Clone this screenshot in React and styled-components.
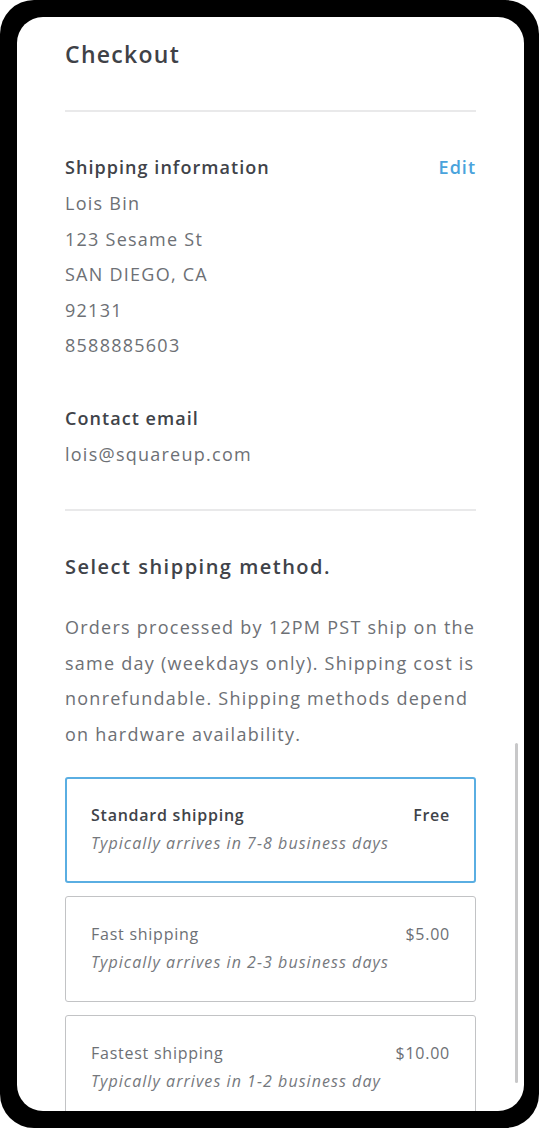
import React from "react";
import styled, { createGlobalStyle } from "styled-components";

const GlobalStyle = createGlobalStyle`
  html, body {
    margin: 0;
    padding: 0;
    background: #ffffff;
  }
  body {
    font-family: "Open Sans", "Liberation Sans", sans-serif;
    -webkit-font-smoothing: antialiased;
  }
`;

const Frame = styled.div`
  width: 539px;
  height: 1128px;
  box-sizing: border-box;
  background: #000;
  border-radius: 34px;
  padding: 17px 15px 17px 17px;
`;

const Screen = styled.div`
  position: relative;
  height: 100%;
  background: #fff;
  border-radius: 26px;
  overflow: hidden;
`;

const Content = styled.div`
  padding: 21px 48px 0 48px;
  color: #404349;
`;

const PageTitle = styled.h1`
  margin: 0;
  font-size: 23px;
  line-height: 32px;
  font-weight: 600;
  letter-spacing: 1.3px;
  color: #3f4247;
`;

const Divider = styled.hr`
  margin: ${(p) => p.$top}px 0 0 0;
  border: 0;
  height: 2px;
  background: #e9e9ea;
`;

const Section = styled.section`
  margin-top: ${(p) => p.$top}px;
`;

const SectionHead = styled.div`
  display: flex;
  justify-content: space-between;
  align-items: center;
  height: 28px;
`;

const Label = styled.h2`
  margin: 0;
  font-size: 18px;
  font-weight: 600;
  letter-spacing: 1.05px;
  color: #404349;
`;

const EditLink = styled.a`
  font-size: 18px;
  font-weight: 600;
  letter-spacing: 1px;
  color: #4aa3dc;
  text-decoration: none;
  cursor: pointer;
`;

const Lines = styled.div`
  margin-top: 5px;
  font-size: 18px;
  line-height: 35.5px;
  letter-spacing: 1.25px;
  color: #6d7075;
`;

const MethodTitle = styled.h2`
  margin: 0;
  font-size: 20px;
  line-height: 30px;
  font-weight: 600;
  letter-spacing: 1.5px;
  color: #404349;
`;

const Note = styled.p`
  margin: 28px 0 0 0;
  font-size: 18px;
  line-height: 35.5px;
  letter-spacing: 1.25px;
  color: #6d7075;
`;

const Options = styled.div`
  display: flex;
  flex-direction: column;
  gap: 13px;
  margin-top: 25px;
`;

const OptionCard = styled.div`
  box-sizing: border-box;
  height: 106px;
  border-radius: 3px;
  border: ${(p) => (p.$selected ? "2px solid #5aaee2" : "1px solid #c2c3c5")};
  padding: ${(p) => (p.$selected ? "22px 24px 0" : "23px 25px 0")};
`;

const OptionRow = styled.div`
  display: flex;
  justify-content: space-between;
  font-size: 16px;
  line-height: 28px;
  letter-spacing: 0.75px;
  font-weight: ${(p) => (p.$selected ? 600 : 400)};
  color: ${(p) => (p.$selected ? "#404349" : "#6d7075")};
`;

const OptionSub = styled.div`
  font-size: 16px;
  line-height: 28px;
  letter-spacing: 1.05px;
  font-style: italic;
  color: #75787d;
`;

const Scrollbar = styled.div`
  position: absolute;
  right: 6px;
  top: 726px;
  width: 3px;
  height: 340px;
  border-radius: 2px;
  background: #c8c8c9;
`;

const address = ["Lois Bin", "123 Sesame St", "SAN DIEGO, CA", "92131", "8588885603"];

const methods = [
  { name: "Standard shipping", price: "Free", eta: "Typically arrives in 7-8 business days", selected: true },
  { name: "Fast shipping", price: "$5.00", eta: "Typically arrives in 2-3 business days" },
  { name: "Fastest shipping", price: "$10.00", eta: "Typically arrives in 1-2 business day" },
];

export default function App() {
  return (
    <>
      <GlobalStyle />
      <Frame>
        <Screen>
          <Content>
            <PageTitle>Checkout</PageTitle>
            <Divider $top={40} />

            <Section $top={41}>
              <SectionHead>
                <Label>Shipping information</Label>
                <EditLink>Edit</EditLink>
              </SectionHead>
              <Lines>
                {address.map((line) => (
                  <div key={line}>{line}</div>
                ))}
              </Lines>
            </Section>

            <Section $top={40}>
              <SectionHead>
                <Label>Contact email</Label>
              </SectionHead>
              <Lines>lois@squareup.com</Lines>
            </Section>

            <Divider $top={37} />

            <Section $top={41}>
              <MethodTitle>Select shipping method.</MethodTitle>
              <Note>
                Orders processed by 12PM PST ship on the same day (weekdays only). Shipping cost is
                nonrefundable. Shipping methods depend on hardware availability.
              </Note>
              <Options>
                {methods.map((m) => (
                  <OptionCard key={m.name} $selected={m.selected}>
                    <OptionRow $selected={m.selected}>
                      <span>{m.name}</span>
                      <span>{m.price}</span>
                    </OptionRow>
                    <OptionSub>{m.eta}</OptionSub>
                  </OptionCard>
                ))}
              </Options>
            </Section>
          </Content>
          <Scrollbar />
        </Screen>
      </Frame>
    </>
  );
}
